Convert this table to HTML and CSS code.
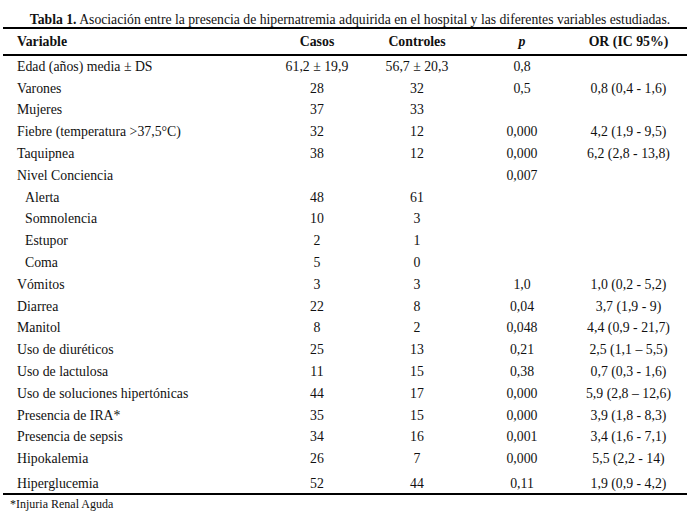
FILE: index.html
```html
<!DOCTYPE html>
<html lang="es">
<head>
<meta charset="utf-8">
<title>Tabla 1</title>
<link rel="stylesheet" href="styles.css">
</head>
<body class="doc">
<div class="page">
  <p class="caption"><b>Tabla 1.</b> Asociación entre la presencia de hipernatremia adquirida en el hospital y las diferentes variables estudiadas.</p>
  <table class="data">
    <colgroup>
      <col class="c-var">
      <col class="c-casos">
      <col class="c-ctrl">
      <col class="c-p">
      <col class="c-or">
    </colgroup>
    <thead>
      <tr><th class="var">Variable</th><th class="num">Casos</th><th class="num">Controles</th><th class="num"><i>p</i></th><th class="num or">OR (IC 95%)</th></tr>
    </thead>
    <tbody>
      <tr><td class="var">Edad (años) media ± DS</td><td class="num">61,2 ± 19,9</td><td class="num">56,7 ± 20,3</td><td class="num">0,8</td><td class="num or"></td></tr>
      <tr><td class="var">Varones</td><td class="num">28</td><td class="num">32</td><td class="num">0,5</td><td class="num or">0,8 (0,4 - 1,6)</td></tr>
      <tr><td class="var">Mujeres</td><td class="num">37</td><td class="num">33</td><td class="num"></td><td class="num or"></td></tr>
      <tr><td class="var">Fiebre (temperatura &gt;37,5°C)</td><td class="num">32</td><td class="num">12</td><td class="num">0,000</td><td class="num or">4,2 (1,9 - 9,5)</td></tr>
      <tr><td class="var">Taquipnea</td><td class="num">38</td><td class="num">12</td><td class="num">0,000</td><td class="num or">6,2 (2,8 - 13,8)</td></tr>
      <tr><td class="var">Nivel Conciencia</td><td class="num"></td><td class="num"></td><td class="num">0,007</td><td class="num or"></td></tr>
      <tr><td class="var sub">Alerta</td><td class="num">48</td><td class="num">61</td><td class="num"></td><td class="num or"></td></tr>
      <tr><td class="var sub">Somnolencia</td><td class="num">10</td><td class="num">3</td><td class="num"></td><td class="num or"></td></tr>
      <tr><td class="var sub">Estupor</td><td class="num">2</td><td class="num">1</td><td class="num"></td><td class="num or"></td></tr>
      <tr><td class="var sub">Coma</td><td class="num">5</td><td class="num">0</td><td class="num"></td><td class="num or"></td></tr>
      <tr><td class="var">Vómitos</td><td class="num">3</td><td class="num">3</td><td class="num">1,0</td><td class="num or">1,0 (0,2 - 5,2)</td></tr>
      <tr><td class="var">Diarrea</td><td class="num">22</td><td class="num">8</td><td class="num">0,04</td><td class="num or">3,7 (1,9 - 9)</td></tr>
      <tr><td class="var">Manitol</td><td class="num">8</td><td class="num">2</td><td class="num">0,048</td><td class="num or">4,4 (0,9 - 21,7)</td></tr>
      <tr><td class="var">Uso de diuréticos</td><td class="num">25</td><td class="num">13</td><td class="num">0,21</td><td class="num or">2,5 (1,1 – 5,5)</td></tr>
      <tr><td class="var">Uso de lactulosa</td><td class="num">11</td><td class="num">15</td><td class="num">0,38</td><td class="num or">0,7 (0,3 - 1,6)</td></tr>
      <tr><td class="var">Uso de soluciones hipertónicas</td><td class="num">44</td><td class="num">17</td><td class="num">0,000</td><td class="num or">5,9 (2,8 – 12,6)</td></tr>
      <tr><td class="var">Presencia de IRA*</td><td class="num">35</td><td class="num">15</td><td class="num">0,000</td><td class="num or">3,9 (1,8 - 8,3)</td></tr>
      <tr><td class="var">Presencia de sepsis</td><td class="num">34</td><td class="num">16</td><td class="num">0,001</td><td class="num or">3,4 (1,6 - 7,1)</td></tr>
      <tr><td class="var">Hipokalemia</td><td class="num">26</td><td class="num">7</td><td class="num">0,000</td><td class="num or">5,5 (2,2 - 14)</td></tr>
      <tr class="last"><td class="var">Hiperglucemia</td><td class="num">52</td><td class="num">44</td><td class="num">0,11</td><td class="num or">1,9 (0,9 - 4,2)</td></tr>
    </tbody>
  </table>
  <p class="note">*Injuria Renal Aguda</p>
</div>
</body>
</html>
```
FILE: styles.css
```css
.doc {
  margin: 0;
  padding: 0;
  background: #ffffff;
}
.page {
  width: 690px;
  padding: 13px 3px 0 3px;
  box-sizing: border-box;
  font-family: "Liberation Serif", "Times New Roman", serif;
  font-size: 13.8px;
  color: #111111;
}
.caption {
  margin: 0;
  text-align: center;
  padding-left: 10px;
  font-family: "Liberation Serif", "Times New Roman", serif;
  font-size: 13.7px;
  line-height: 14px;
}
.data {
  width: 684px;
  border-collapse: collapse;
  table-layout: fixed;
  margin-top: 0;
  border-top: 2px solid #000;
  border-bottom: 2px solid #000;
  font-family: "Liberation Serif", "Times New Roman", serif;
  font-size: 13.8px;
}
.c-var { width: 259px; }
.c-casos { width: 110px; }
.c-ctrl { width: 90px; }
.c-p { width: 120px; }
.c-or { width: 105px; }
.data .var,
.data .num {
  font-family: "Liberation Serif", "Times New Roman", serif;
  padding: 0;
  white-space: nowrap;
  color: #111111;
}
.data thead .var,
.data thead .num {
  font-weight: bold;
  height: 25px;
  border-bottom: 2px solid #000;
}
.data tbody .var,
.data tbody .num {
  height: 21.8px;
}
.data .num {
  text-align: center;
}
.data .var {
  text-align: left;
  padding-left: 14px;
}
.data .var.sub {
  padding-left: 22px;
}
.data .or {
  padding-right: 12px;
}
.data tr.last .var,
.data tr.last .num {
  height: 19px;
  padding-top: 4px;
}
.note {
  margin: 2px 0 0 7px;
  font-family: "Liberation Serif", "Times New Roman", serif;
  font-size: 12px;
  line-height: 14px;
}
```
